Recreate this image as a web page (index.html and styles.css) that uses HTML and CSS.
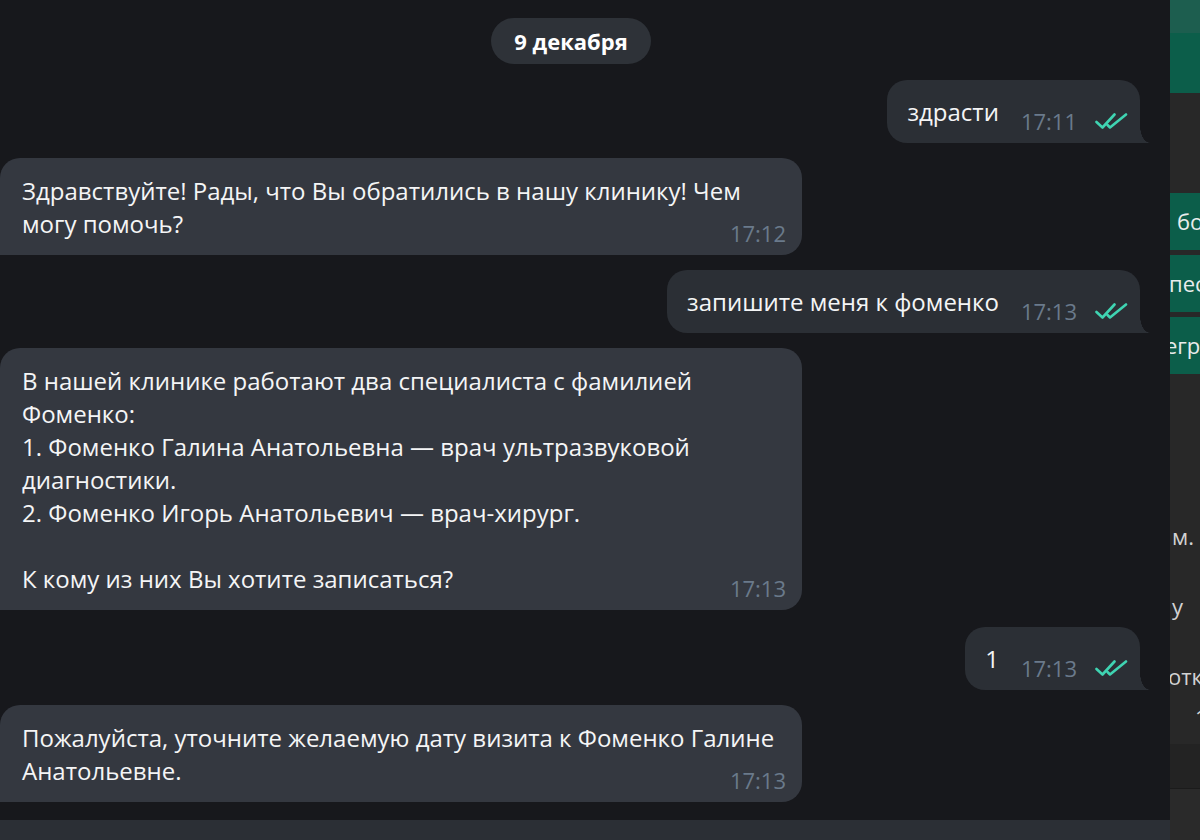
FILE: index.html
```html
<!DOCTYPE html>
<html lang="ru">
<head>
<meta charset="utf-8">
<title>Чат</title>
<link rel="stylesheet" href="styles.css">
</head>
<body>
<div class="app">
  <main class="chat">
    <div class="messages">
      <div class="date"><span class="date-pill">9 декабря</span></div>

      <div class="msg out">
        <div class="bubble">здрасти<span class="meta"><span class="time">17:11</span><svg class="check" viewBox="0 0 33 16" width="33" height="16"><path d="M1.5 9 L7.5 14.5 L19.5 1.5" /><path d="M12.5 12 L15 14.5 L31 1.5" /></svg></span></div>
      </div>

      <div class="msg in">
        <div class="bubble">Здравствуйте! Рады, что Вы обратились в нашу клинику! Чем могу помочь?<span class="meta"><span class="time">17:12</span></span></div>
      </div>

      <div class="msg out">
        <div class="bubble">запишите меня к фоменко<span class="meta"><span class="time">17:13</span><svg class="check" viewBox="0 0 33 16" width="33" height="16"><path d="M1.5 9 L7.5 14.5 L19.5 1.5" /><path d="M12.5 12 L15 14.5 L31 1.5" /></svg></span></div>
      </div>

      <div class="msg in">
        <div class="bubble">В нашей клинике работают два специалиста с фамилией Фоменко:<br>1. Фоменко Галина Анатольевна — врач ультразвуковой диагностики.<br>2. Фоменко Игорь Анатольевич — врач-хирург.<br><br>К кому из них Вы хотите записаться?<span class="meta"><span class="time">17:13</span></span></div>
      </div>

      <div class="msg out spaced">
        <div class="bubble">1<span class="meta"><span class="time">17:13</span><svg class="check" viewBox="0 0 33 16" width="33" height="16"><path d="M1.5 9 L7.5 14.5 L19.5 1.5" /><path d="M12.5 12 L15 14.5 L31 1.5" /></svg></span></div>
      </div>

      <div class="msg in">
        <div class="bubble">Пожалуйста, уточните желаемую дату визита к Фоменко Галине Анатольевне.<span class="meta"><span class="time">17:13</span></span></div>
      </div>
    </div>
    <div class="composer"></div>
  </main>

  <aside class="side">
    <div class="side-top"></div>
    <div class="side-green"></div>
    <div class="side-space"></div>
    <div class="side-btn b1">бо</div>
    <div class="side-btn b2">пес</div>
    <div class="side-btn b3">егр</div>
    <div class="side-lower">
      <div class="side-line l1">м.</div>
      <div class="side-line l2">у</div>
      <div class="side-line l3">отк</div>
      <div class="side-line l4">1</div>
    </div>
    <div class="side-band"></div>
    <div class="side-foot"></div>
  </aside>
</div>
</body>
</html>
```

FILE: styles.css
```css
* { box-sizing: border-box; }

html, body {
  margin: 0;
  padding: 0;
  width: 1200px;
  height: 840px;
  overflow: hidden;
  background: #17181c;
  font-family: "Open Sans", "Noto Sans", sans-serif;
}

.app {
  display: flex;
  width: 1200px;
  height: 840px;
}

.chat {
  width: 1170px;
  flex: none;
  display: flex;
  flex-direction: column;
  background: #17181c;
}

.messages {
  flex: 1;
  display: flex;
  flex-direction: column;
  gap: 15px;
  padding-top: 18px;
}

.date {
  display: flex;
  justify-content: center;
  padding-right: 28px;
  margin-bottom: 1px;
}

.date-pill {
  height: 46px;
  padding: 0 23px;
  border-radius: 23px;
  background: #2e3238;
  color: #ffffff;
  font-weight: 700;
  font-size: 22px;
  line-height: 46px;
}

.msg {
  display: flex;
}

.msg.out {
  align-self: flex-end;
  margin-right: 30px;
}

.msg.spaced {
  margin-top: 2px;
}

.msg.in {
  align-self: flex-start;
  width: 802px;
}

.bubble {
  display: flow-root;
  position: relative;
  color: #f4f5f6;
  font-size: 24px;
  line-height: 33px;
}

.msg.out .bubble {
  background: #2b2f35;
  padding: 15px 12px 15px 20px;
  border-radius: 20px 20px 0 20px;
}

.msg.out .bubble::after {
  content: "";
  position: absolute;
  right: -10px;
  bottom: 0;
  width: 10px;
  height: 17px;
  background: radial-gradient(ellipse 10px 17px at 100% 0, transparent 97%, #2b2f35 100%);
}

.msg.in .bubble {
  width: 100%;
  background: #343840;
  padding: 16px 16px 15px 22px;
  border-radius: 20px 20px 20px 0;
}

.msg.in .bubble.tall {
  padding-bottom: 17px;
}

.meta {
  float: right;
  display: flex;
  align-items: center;
  gap: 18px;
  height: 16px;
  margin-top: 18px;
  margin-bottom: -4px;
  margin-left: 22px;
}

.time {
  color: #6a7a8b;
  font-size: 22px;
  line-height: 16px;
}

.check {
  display: block;
  fill: none;
  stroke: #3fd4b2;
  stroke-width: 2.6;
  stroke-linecap: round;
  stroke-linejoin: round;
}

.composer {
  height: 20px;
  background: #2b2f35;
  flex: none;
}

/* right side panel (cut off) */
.side {
  width: 30px;
  flex: none;
  height: 840px;
  overflow: hidden;
  display: flex;
  flex-direction: column;
  background: #282828;
  color: #e9ecec;
  font-size: 22px;
  white-space: nowrap;
}

.side-top {
  height: 33px;
  background: #1d5e4f;
  flex: none;
}

.side-green {
  height: 60px;
  background: #0c5e4a;
  flex: none;
}

.side-space {
  height: 100px;
  flex: none;
}

.side-btn {
  height: 57px;
  flex: none;
  background: #0c5e4a;
  line-height: 57px;
  margin-bottom: 5px;
}

.b1 { padding-left: 7px; }
.b2 { text-indent: -1px; }
.b3 { text-indent: -5px; }

.side-lower {
  height: 365px;
  flex: none;
  color: #d2d2d2;
  padding-top: 147px;
}

.side-line {
  height: 20px;
  line-height: 20px;
}

.l1 { margin-left: 2px; }
.l2 { margin-top: 50px; margin-left: 2px; }
.l3 { margin-top: 50px; margin-left: -2px; }
.l4 { margin-top: 21px; margin-left: 25px; }

.side-band {
  height: 45px;
  flex: none;
  background: #232323;
  border-bottom: 1px solid #1b1b1b;
}

.side-foot {
  flex: 1;
  background: #2a2a2a;
}
```
